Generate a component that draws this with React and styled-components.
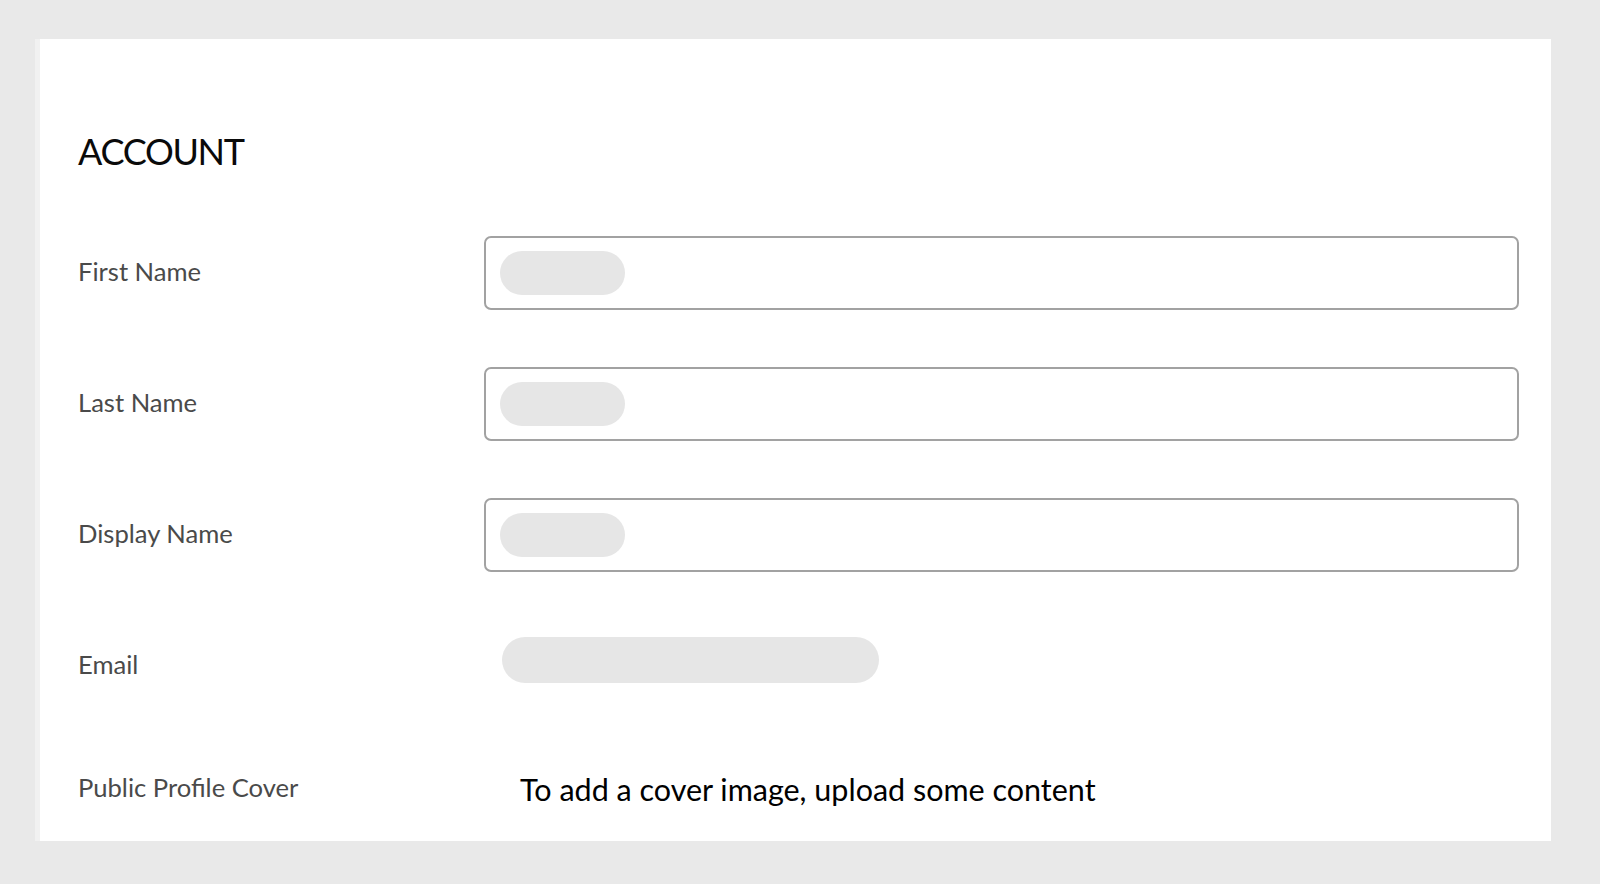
import React from 'react';
import styled, { createGlobalStyle } from 'styled-components';

const GlobalStyle = createGlobalStyle`
  html, body {
    margin: 0;
    padding: 0;
    background: #e9e9e9;
    font-family: Lato, "Open Sans", sans-serif;
  }
  * {
    box-sizing: border-box;
  }
`;

const Page = styled.div`
  padding: 39px 49px 44px 35px;
`;

const Panel = styled.section`
  background: #fff;
  border-left: 5px solid #f1f1f1;
  padding: 92px 32px 23px 38px;
`;

const Heading = styled.h1`
  margin: 0 0 65px;
  height: 40px;
  line-height: 40px;
  font-size: 36px;
  font-weight: 400;
  letter-spacing: -1.3px;
  color: #0a0a0a;
`;

const Form = styled.div`
  display: flex;
  flex-direction: column;
  gap: 57px;
`;

const Row = styled.div`
  display: grid;
  grid-template-columns: 406px 1fr;
  align-items: center;
  height: ${(p) => p.$height || 74}px;
`;

const Label = styled.label`
  font-size: 25.6px;
  color: #4a4a4a;
  line-height: 1;
  margin-top: -2px;
`;

const Field = styled.div`
  height: 74px;
  border: 2px solid #a2a2a2;
  border-radius: 7px;
  display: flex;
  align-items: center;
  padding-left: 14px;
`;

const Pill = styled.span`
  display: block;
  width: ${(p) => p.$width}px;
  height: ${(p) => p.$h || 44}px;
  border-radius: 999px;
  background: #e6e6e6;
`;

const EmailValue = styled.div`
  align-self: start;
  padding: 8px 0 0 18px;
`;

const CoverNote = styled.p`
  margin: 0 0 0 36px;
  font-size: 30.5px;
  color: #000;
`;

const fields = ['First Name', 'Last Name', 'Display Name'];

export default function App() {
  return (
    <>
      <GlobalStyle />
      <Page>
        <Panel>
          <Heading>ACCOUNT</Heading>
          <Form>
            {fields.map((name) => (
              <Row key={name}>
                <Label>{name}</Label>
                <Field>
                  <Pill $width={125} />
                </Field>
              </Row>
            ))}
            <Row>
              <Label>Email</Label>
              <EmailValue>
                <Pill $width={377} $h={46} />
              </EmailValue>
            </Row>
            <Row $height={58}>
              <Label>Public Profile Cover</Label>
              <CoverNote>To add a cover image, upload some content</CoverNote>
            </Row>
          </Form>
        </Panel>
      </Page>
    </>
  );
}
